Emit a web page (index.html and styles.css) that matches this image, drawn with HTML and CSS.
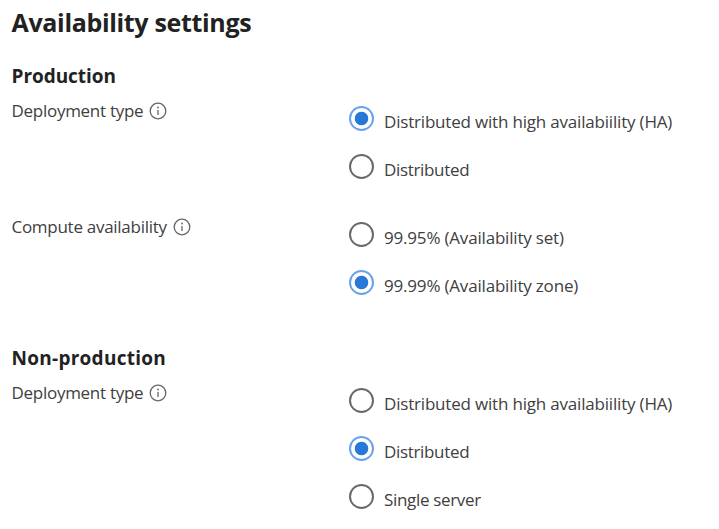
FILE: index.html
```html
<!DOCTYPE html>
<html lang="en">
<head>
<meta charset="utf-8">
<title>Availability settings</title>
<link rel="stylesheet" href="styles.css">
</head>
<body>
<svg class="defs" aria-hidden="true"><symbol id="info" viewBox="0 0 18 18"><circle cx="9" cy="9" r="7.8" fill="none" stroke="#666" stroke-width="1.3"/><path d="M9 8v5" stroke="#666" stroke-width="1.3"/><circle cx="9" cy="5.5" r=".9" fill="#666"/></symbol></svg>
<main>
<h1>Availability settings</h1>
<section class="production">
<h2>Production</h2>
<div class="field"><div class="label"><span>Deployment type</span><svg class="info"><use href="#info"/></svg></div>
<div class="options">
<label class="option"><i class="radio on"></i><span class="text long">Distributed with high availabiility (HA)</span></label>
<label class="option"><i class="radio"></i><span class="text">Distributed</span></label>
</div></div>
<div class="field compute"><div class="label"><span>Compute availability</span><svg class="info"><use href="#info"/></svg></div>
<div class="options">
<label class="option"><i class="radio"></i><span class="text long">99.95% (Availability set)</span></label>
<label class="option"><i class="radio on"></i><span class="text long">99.99% (Availability zone)</span></label>
</div></div>
</section>
<section class="nonproduction">
<h2>Non-production</h2>
<div class="field"><div class="label"><span>Deployment type</span><svg class="info"><use href="#info"/></svg></div>
<div class="options">
<label class="option"><i class="radio"></i><span class="text long">Distributed with high availabiility (HA)</span></label>
<label class="option"><i class="radio on"></i><span class="text">Distributed</span></label>
<label class="option"><i class="radio"></i><span class="text">Single server</span></label>
</div></div>
</section>
</main>
</body>
</html>
```
FILE: styles.css
```css
* { box-sizing: border-box; }
body { margin: 0; background: #fff; color: #404040; font: 17px/24px "Open Sans", "Noto Sans", sans-serif; overflow: hidden; }
.defs { display: none; }
main { padding: 5px 0 0 11.5px; height: 529px; }
h1, h2 { margin: 0; color: #222; font-weight: 700; }
h1 { font-size: 25px; line-height: 34px; letter-spacing: -.33px; }
h2 { font-size: 19px; line-height: 26px; letter-spacing: -.05px; }
.nonproduction h2 { letter-spacing: .27px; }
.production { padding-top: 24px; height: 306px; }
.field { display: grid; grid-template-columns: 337.5px 1fr; }
.compute { margin-top: 15px; }
.label { display: flex; align-items: center; height: 24px; gap: 6px; margin-top: 10px; letter-spacing: -.28px; }
.info { width: 18px; height: 18px; }
.options { padding-top: 5px; }
.option { display: flex; gap: 10px; height: 48px; letter-spacing: -.33px; }
.text { margin-top: 16px; }
.text.long { letter-spacing: -.19px; }
.radio { width: 25px; height: 25px; border: 2px solid #6a6a6a; border-radius: 50%; margin-top: 12px; }
.radio.on { border-color: #6aa2ea; background: radial-gradient(circle, #2878d8 0 6.3px, #fff 7.2px); }
```
